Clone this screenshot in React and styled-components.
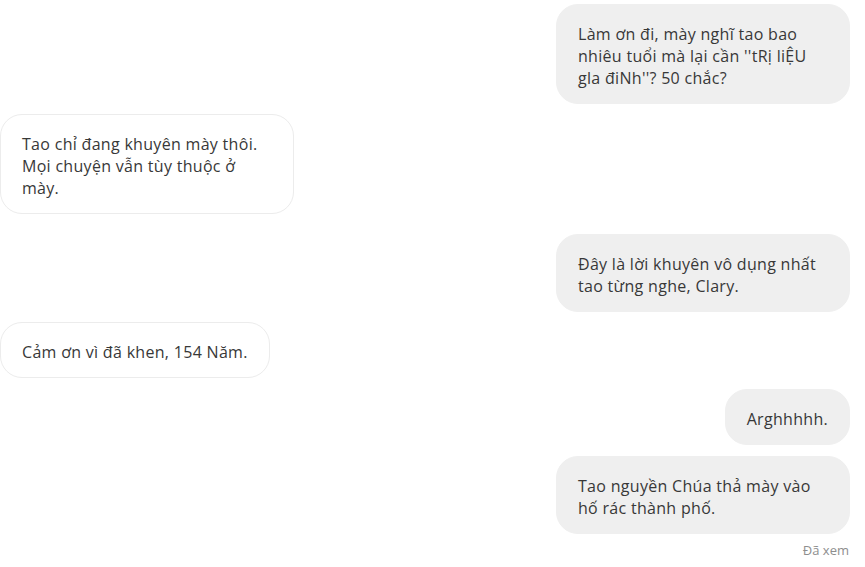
import React from "react";
import styled, { createGlobalStyle } from "styled-components";

const Global = createGlobalStyle`
  html, body { margin: 0; padding: 0; background: #ffffff; }
  body { font-family: "Open Sans", "Noto Sans", sans-serif; }
`;

const Thread = styled.div`
  display: flex;
  flex-direction: column;
  padding: 4px 15px 0 0;
  width: 865px;
  box-sizing: border-box;
`;

const Row = styled.div`
  display: flex;
  justify-content: ${(p) => (p.$mine ? "flex-end" : "flex-start")};
  margin-top: ${(p) => p.$gap || 0}px;
`;

const Bubble = styled.div`
  box-sizing: border-box;
  width: ${(p) => (p.$wide ? "294px" : "auto")};
  padding: 18px 21px 14px;
  border-radius: 22px;
  border: 1px solid ${(p) => (p.$mine ? "#efefef" : "#ececec")};
  background: ${(p) => (p.$mine ? "#efefef" : "#ffffff")};
  color: #383838;
  font-size: 16px;
  letter-spacing: 0.3px;
  line-height: 22px;
  white-space: nowrap;
`;

const Line = styled.div``;

const Seen = styled.div`
  align-self: flex-end;
  margin-top: 7px;
  margin-right: 1px;
  color: #8e8e8e;
  font-size: 13px;
  line-height: 18px;
`;

const messages = [
  { mine: true, gap: 0, lines: ["Làm ơn đi, mày nghĩ tao bao", "nhiêu tuổi mà lại cần ''tRị liỆU", "gla điNh''? 50 chắc?"] },
  { mine: false, gap: 10, lines: ["Tao chỉ đang khuyên mày thôi.", "Mọi chuyện vẫn tùy thuộc ở", "mày."] },
  { mine: true, gap: 20, lines: ["Đây là lời khuyên vô dụng nhất", "tao từng nghe, Clary."] },
  { mine: false, gap: 10, lines: ["Cảm ơn vì đã khen, 154 Năm."] },
  { mine: true, gap: 11, lines: ["Arghhhhh."] },
  { mine: true, gap: 11, lines: ["Tao nguyền Chúa thả mày vào", "hố rác thành phố."] },
];

export default function App() {
  return (
    <>
      <Global />
      <Thread>
        {messages.map((m, i) => (
          <Row key={i} $mine={m.mine} $gap={m.gap}>
            <Bubble $mine={m.mine} $wide={m.lines.length > 1}>
              {m.lines.map((l, j) => (
                <Line key={j}>{l}</Line>
              ))}
            </Bubble>
          </Row>
        ))}
        <Seen>Đã xem</Seen>
      </Thread>
    </>
  );
}
